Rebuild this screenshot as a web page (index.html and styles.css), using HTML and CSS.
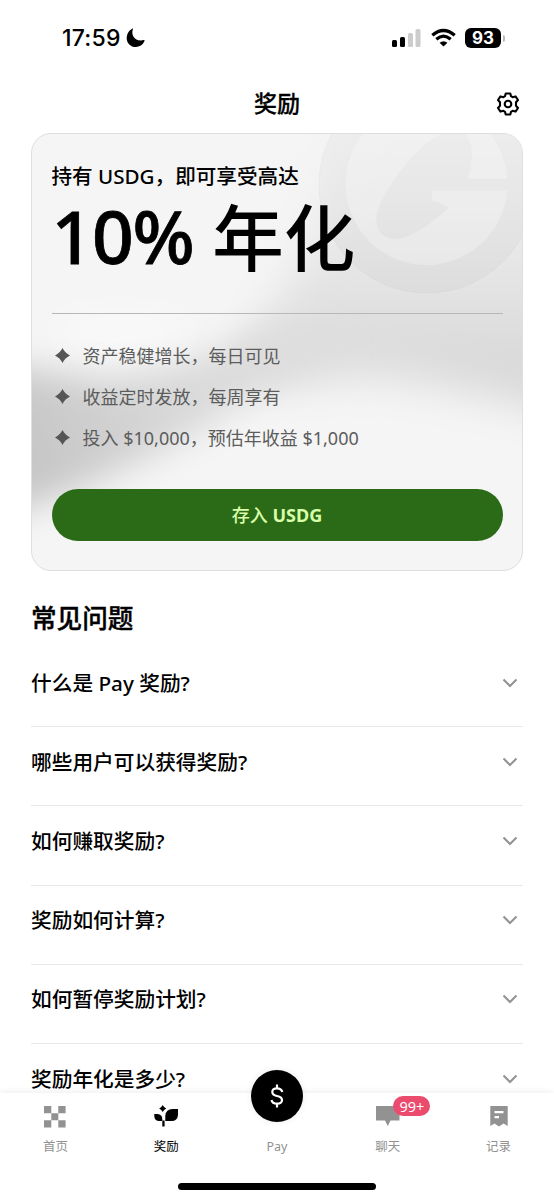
FILE: index.html
```html
<!DOCTYPE html>
<html lang="zh-CN">
<head>
<meta charset="utf-8">
<title>奖励</title>
<link rel="stylesheet" href="styles.css">
</head>
<body>
<div class="screen">
  <header class="status">
    <div class="status-left"><span class="clock">17:59</span>
      <svg class="moon" width="19" height="20" viewBox="0 0 19 20"><path d="M7 .8C4.5 7.500 9 14 17.800 12.100 18.500 12 18.700 12.600 18.400 13.300 16.800 17 13.500 19 9.800 19 4.700 19 .7 15.200.7 10.200.7 6 3 2.300 6.200.7 6.800.4 7.200.4 7 .8Z"/></svg>
    </div>
    <div class="status-right">
      <svg width="29" height="18" viewBox="0 0 29 18"><rect x="0" y="11" width="5" height="7" rx="1.500"/><rect x="8" y="8" width="5" height="10" rx="1.500"/><g fill="#ccc"><rect x="16" y="4" width="5" height="14" rx="1.500"/><rect x="23.500" y="0" width="5" height="18" rx="1.500"/></g></svg>
      <svg class="wifi" width="25" height="18" viewBox="0 0 25 18"><g fill="none" stroke="#000" stroke-width="3.200"><path d="M1.300 6.200Q12.500-3.200 23.700 6.200"/><path d="M5.300 10.200Q12.500 4 19.700 10.200"/></g><path d="M12.500 17.600 8.600 13.800Q12.500 10.600 16.400 13.800Z"/></svg>
      <div class="battery"><span class="level">93</span><i class="tip"></i></div>
    </div>
  </header>
  <div class="titlebar">
    <span></span><h1>奖励</h1>
    <svg class="gear" width="24" height="24" viewBox="0 0 24 24" fill="none" stroke="#000" stroke-width="2.100" stroke-linejoin="round"><path d="M9 4.200 9.700 1.500H14.300L15 4.200 16.600 5.200 19.500 4.400 22 8 20 10.300V13.700L22 16 19.500 19.600 16.600 18.800 15 19.800 14.300 22.500H9.700L9 19.800 7.400 18.800 4.500 19.600 2 16 4 13.700V10.300L2 8 4.500 4.400 7.400 5.200Z"/><circle cx="12" cy="12" r="3.300"/></svg>
  </div>
  <main>
    <section class="card">
      <svg class="art" viewBox="0 0 490 436" preserveAspectRatio="none">
        <defs>
          <filter id="soft" x="-30%" y="-30%" width="160%" height="160%"><feGaussianBlur stdDeviation="22"/></filter>
          <filter id="fine" x="-30%" y="-30%" width="160%" height="160%"><feGaussianBlur stdDeviation="17"/></filter>
          <filter id="glow" x="-100%" y="-300%" width="300%" height="700%"><feGaussianBlur stdDeviation="15"/></filter>
          <linearGradient id="shade" gradientUnits="userSpaceOnUse" x1="0" y1="0" x2="0" y2="280"><stop offset="0" stop-color="#f3f3f3"/><stop offset=".4" stop-color="#e8e8e8"/><stop offset=".7" stop-color="#dedede"/><stop offset="1" stop-color="#d2d2d2"/></linearGradient>
          <linearGradient id="band" gradientUnits="userSpaceOnUse" x1="0" y1="330" x2="300" y2="180"><stop offset="0" stop-color="#c6c6c6"/><stop offset=".45" stop-color="#d8d8d8"/><stop offset="1" stop-color="#e0e0e0"/></linearGradient>
          <mask id="leaf"><rect x="300" y="-50" width="190" height="200" fill="#fff"/><path fill="#000" d="M436 45H480V57H400V66L417 73C390 99 364 112 351 101 338 90 346 70 358 52 378 20 404-4 426-3 439-1 444 17 436 45Z"/></mask>
        </defs>
        <path filter="url(#soft)" fill="url(#shade)" d="M320-60H580V292Q460 256 340 240L205 250 232 190 272 120Z"/>
        <path filter="url(#fine)" fill="url(#band)" d="M-60 226 75 246Q160 236 235 190L310 216Q245 242 180 288 80 350-60 390Z"/>
        <ellipse filter="url(#glow)" cx="90" cy="195" rx="65" ry="12" fill="#fff" fill-opacity=".6"/>
        <circle cx="395" cy="51" r="108" fill="#000" fill-opacity=".025" stroke="#000" stroke-opacity=".03"/>
        <circle cx="394.500" cy="50" r="81" fill="#fff" fill-opacity=".27" mask="url(#leaf)"/>
      </svg>
      <div class="content">
        <p class="lead">持有 USDG，即可享受高达</p>
        <p class="rate"><span>10%</span> 年化</p>
        <ul class="benefits">
          <li><svg class="star" viewBox="0 0 14 14"><path d="M7 0Q9.300 4.700 14 7 9.300 9.300 7 14 4.700 9.300 0 7 4.700 4.700 7 0Z"/></svg>资产稳健增长，每日可见</li>
          <li><svg class="star" viewBox="0 0 14 14"><path d="M7 0Q9.300 4.700 14 7 9.300 9.300 7 14 4.700 9.300 0 7 4.700 4.700 7 0Z"/></svg>收益定时发放，每周享有</li>
          <li><svg class="star" viewBox="0 0 14 14"><path d="M7 0Q9.300 4.700 14 7 9.300 9.300 7 14 4.700 9.300 0 7 4.700 4.700 7 0Z"/></svg>投入 $10,000，预估年收益 $1,000</li>
        </ul>
        <button class="deposit">存入 <b>USDG</b></button>
      </div>
    </section>
    <section class="faq">
      <h2>常见问题</h2>
      <div class="q"><span>什么是 Pay 奖励?</span><svg class="chev" viewBox="0 0 16 10"><path d="M1.500 1.500 8 8 14.500 1.500"/></svg></div>
      <div class="q"><span>哪些用户可以获得奖励?</span><svg class="chev" viewBox="0 0 16 10"><path d="M1.500 1.500 8 8 14.500 1.500"/></svg></div>
      <div class="q"><span>如何赚取奖励?</span><svg class="chev" viewBox="0 0 16 10"><path d="M1.500 1.500 8 8 14.500 1.500"/></svg></div>
      <div class="q"><span>奖励如何计算?</span><svg class="chev" viewBox="0 0 16 10"><path d="M1.500 1.500 8 8 14.500 1.500"/></svg></div>
      <div class="q"><span>如何暂停奖励计划?</span><svg class="chev" viewBox="0 0 16 10"><path d="M1.500 1.500 8 8 14.500 1.500"/></svg></div>
      <div class="q"><span>奖励年化是多少?</span><svg class="chev" viewBox="0 0 16 10"><path d="M1.500 1.500 8 8 14.500 1.500"/></svg></div>
    </section>
  </main>
  <nav class="tabs">
    <div class="tab"><svg width="22" height="22" viewBox="0 0 22 22"><path d="M0 0H7.300V7.300H0ZM14.300 0H21.600V7.300H14.300ZM7.300 7.300H14.300V14.300H7.300ZM0 14.300H7.300V21.600H0ZM14.300 14.300H21.600V21.600H14.300Z"/></svg><span>首页</span></div>
    <div class="tab active"><svg width="24" height="22" viewBox="0 0 24 22"><path d="M8.700-1Q9.900 1.500 12.200 2.500 9.900 3.500 8.700 6 7.500 3.500 5.200 2.500 7.500 1.500 8.700-1Z"/><path d="M.3 8H3.500Q8.300 8.300 8.300 13V15H5.500Q.3 15 .3 10ZM24 3V9Q23.500 15 17.500 15H11.300V9.500Q12 3.200 18.500 3Z"/><path d="M8.300 14.500H10.600V20.500H8.300Z"/></svg><span>奖励</span></div>
    <div class="tab"><i class="pay"><svg width="16" height="26" viewBox="0 0 16 26" fill="none" stroke="#fff" stroke-width="2.200"><path d="M8 1.500V5M8 21V24.500M13.300 9Q12.400 5.300 8 5.300 3.300 5.300 3.300 9 3.300 12 8 13 13 14 13 17 13 20.700 8 20.700 3.200 20.700 2.500 17"/></svg></i><span>Pay</span></div>
    <div class="tab"><svg width="24" height="22" viewBox="0 0 24 22"><path d="M0 0H23.500V14.500H14.500L11.800 20 9 14.500H0Z"/></svg><b class="badge">99+</b><span>聊天</span></div>
    <div class="tab"><svg width="18" height="22" viewBox="0 0 18 22"><path fill-rule="evenodd" d="M.3 0H17.700V20L13.500 17.500 9 20.500 4.500 17.500.3 20ZM4.500 5V7.200H13.500V5ZM4.500 10V12.200H9V10Z"/></svg><span>记录</span></div>
    <i class="home"></i>
  </nav>
</div>
</body>
</html>
```
FILE: styles.css
```css
* { box-sizing: border-box; margin: 0; padding: 0; }
body { background: #fff; color: #000; font-family: "Noto Sans", "Noto Sans CJK SC", sans-serif; }
svg { display: block; flex: none; overflow: visible; }
.screen { position: relative; width: 554px; height: 1200px; overflow: hidden; }
.status { height: 76px; display: flex; justify-content: space-between; padding: 0 49px 0 62px; align-items: center; }
.status-left, .status-right { display: flex; align-items: center; }
.clock { font: 500 23px/30px Inter, sans-serif; letter-spacing: .2px; }
.moon { margin: 0 0 0 5px; }
.wifi { margin: 0 9px 0 10px; }
.battery { display: flex; align-items: center; }
.level { width: 36px; height: 20px; border-radius: 6px; background: #000; color: #fff; font: 700 17px/20px Inter, sans-serif; text-align: center; }
.tip { width: 2px; height: 7px; margin-left: 2px; border-radius: 0 2px 2px 0; background: #bbb; }
.titlebar { height: 57px; padding: 0 34px 1px 35px; display: grid; grid-template-columns: 24px 1fr 24px; align-items: center; }
h1 { font-size: 23px; line-height: 32px; padding: 0 1px 2px 0; font-weight: 500; -webkit-text-stroke: .3px #000; text-align: center; }
main { padding: 0 31px; }
.card { position: relative; height: 438px; border: 1px solid #dedede; border-radius: 20px; background: #f5f5f5; overflow: hidden; }
.art { position: absolute; inset: 0; width: 100%; height: 100%; overflow: hidden; }
.content { position: relative; padding: 27px 19.500px 0; }
.lead { font-size: 20.6px; line-height: 30px; font-weight: 500; white-space: nowrap; }
.rate { height: 94px; font-size: 71.500px; line-height: 94px; font-weight: 500; white-space: nowrap; }
.rate span { display: inline-block; height: 94px; line-height: 90px; vertical-align: top; font-size: 73px; letter-spacing: -1.200px; -webkit-text-stroke: .8px #000; }
.benefits { list-style: none; margin-top: 28px; padding-top: 20px; border-top: 1px solid #b8b8b8; }
.benefits li { display: flex; align-items: center; height: 41px; font-size: 18px; color: #5c5c5c; white-space: pre; }
.star { width: 15px; height: 15px; margin: 1px 13px 0 3px; fill: #555; }
.deposit { display: block; width: 100%; height: 52px; margin-top: 32px; border: 0; border-radius: 26px; background: #2b6b17; color: #d9ffa8; font: 500 18px/52px "Noto Sans", "Noto Sans CJK SC", sans-serif; }
.deposit b { font-weight: 700; }
h2 { margin-top: 29px; height: 38px; font-size: 25.6px; line-height: 38px; font-weight: 500; -webkit-text-stroke: .4px #000; }
.faq .q { height: 79.200px; padding: 0 5px 9px 0; border-bottom: 1px solid #e8e8e8; display: flex; align-items: center; justify-content: space-between; font-size: 20.7px; font-weight: 500; }
.faq .q span { padding-bottom: 2px; }
.faq .q:nth-of-type(1) { margin-top: 10px; }
.chev { width: 16px; height: 10px; fill: none; stroke: #929292; stroke-width: 2; }
.tabs { position: absolute; left: 0; right: 0; bottom: 0; height: 107px; padding-top: 13px; display: grid; grid-template-columns: repeat(5, 1fr); background: #fff; box-shadow: 0 -2px 6px rgba(0,0,0,.06); }
.tab { position: relative; display: flex; flex-direction: column; align-items: center; color: #929292; fill: #929292; font-size: 12.500px; line-height: 18px; }
.tab span { position: relative; margin-top: 10px; }
.tab svg { height: 22px; }
.tab.active { color: #000; fill: #000; }
.pay { width: 52px; height: 52px; margin: -36px 0 6px; border-radius: 50%; background: #000; display: flex; align-items: center; justify-content: center; box-shadow: 0 0 6px rgba(0,0,0,.08); }
.tab .pay svg { height: 26px; }
.badge { position: absolute; left: 61px; top: -10px; width: 37px; height: 20px; border-radius: 10px; background: #eb4b6d; color: #fff; text-align: center; font-size: 14.500px; line-height: 20px; font-weight: 400; }
.home { position: absolute; left: 178px; bottom: 10px; width: 198px; height: 7px; border-radius: 4px; background: #000; }
```
